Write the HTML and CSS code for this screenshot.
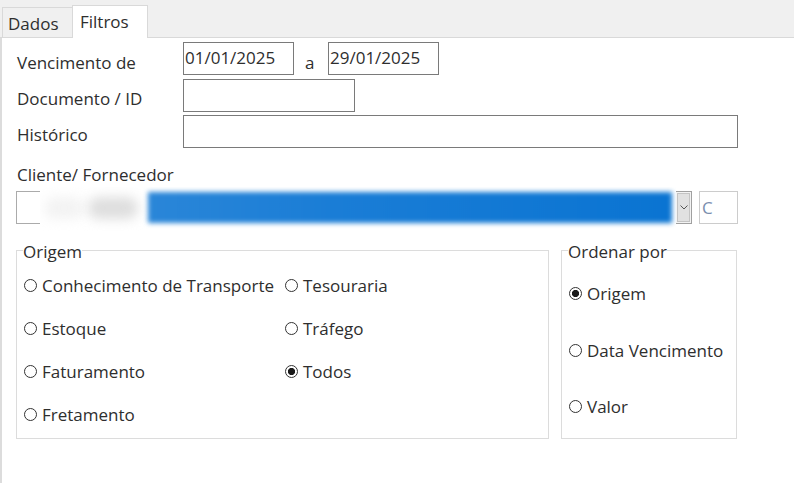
FILE: index.html
```html
<!DOCTYPE html>
<html lang="pt-BR">
<head>
<meta charset="utf-8">
<title>Filtros</title>
<link rel="stylesheet" href="styles.css">
</head>
<body>
<div class="window">
  <div class="tabstrip">
    <div class="tab">Dados</div>
    <div class="tab active">Filtros</div>
  </div>
  <div class="panel">
    <div class="row row1">
      <label class="lbl">Vencimento de</label>
      <input class="txt date" value="01/01/2025">
      <span class="sep">a</span>
      <input class="txt date" value="29/01/2025">
    </div>
    <div class="row row2">
      <label class="lbl">Documento / ID</label>
      <input class="txt doc" value="">
    </div>
    <div class="row row3">
      <label class="lbl">Histórico</label>
      <input class="txt hist" value="">
    </div>
    <div class="lbl-block">Cliente/ Fornecedor</div>
    <div class="combo-row">
      <div class="combo">
        <div class="combo-field"></div>
        <div class="combo-btn">
          <svg width="8" height="5" viewBox="0 0 8 5"><path d="M0.5 0.5 L4 4 L7.5 0.5" fill="none" stroke="#555" stroke-width="1"/></svg>
        </div>
      </div>
      <div class="code-box">C</div>
      <div class="redact">
        <div class="smudge light"></div>
        <div class="smudge"></div>
        <div class="bar"></div>
      </div>
    </div>
    <div class="groups">
      <fieldset class="group origem">
        <legend>Origem</legend>
        <div class="radio-grid">
          <div class="radio"><span class="dot"></span>Conhecimento de Transporte</div>
          <div class="radio"><span class="dot"></span>Tesouraria</div>
          <div class="radio"><span class="dot"></span>Estoque</div>
          <div class="radio"><span class="dot"></span>Tráfego</div>
          <div class="radio"><span class="dot"></span>Faturamento</div>
          <div class="radio"><span class="dot on"></span>Todos</div>
          <div class="radio"><span class="dot"></span>Fretamento</div>
        </div>
      </fieldset>
      <fieldset class="group ordenar">
        <legend>Ordenar por</legend>
        <div class="radio-col">
          <div class="radio"><span class="dot on"></span>Origem</div>
          <div class="radio"><span class="dot"></span>Data Vencimento</div>
          <div class="radio"><span class="dot"></span>Valor</div>
        </div>
      </fieldset>
    </div>
  </div>
</div>
</body>
</html>
```

FILE: styles.css
```css
* { box-sizing: border-box; }

html, body {
  margin: 0;
  height: 100%;
}

body {
  font-family: "Open Sans", "Noto Sans", sans-serif;
  font-size: 17px;
  line-height: 23px;
  color: #2e2e2e;
  background: #fff;
}

.window {
  height: 483px;
  display: flex;
  flex-direction: column;
}

/* tabs */
.tabstrip {
  height: 38px;
  flex: none;
  background: #f0f0f0;
  border-bottom: 1px solid #d9d9d9;
  display: flex;
  align-items: flex-end;
  padding-left: 2px;
}

.tab {
  width: 70px;
  height: 30px;
  padding: 4px 0 0 5px;
  border: 1px solid #d9d9d9;
  border-bottom: none;
  border-right: none;
  background: #f0f0f0;
}

.tab.active {
  width: 76px;
  height: 33px;
  margin-bottom: -1px;
  padding: 4px 0 0 7px;
  border-right: 1px solid #d9d9d9;
  background: #fff;
  position: relative;
  z-index: 1;
}

/* panel */
.panel {
  flex: 1;
  border-left: 2px solid #dcdcdc;
  padding: 4px 0 0 14px;
}

.row {
  display: flex;
  height: 33px;
}

.row1 { margin-bottom: 4px; }
.row2 { margin-bottom: 3px; }

.lbl {
  width: 167px;
  flex: none;
  padding: 8px 0 0 1px;
}

.row1 .lbl { padding-top: 9px; }

.txt {
  height: 33px;
  margin: 0;
  border: 1px solid #7a7a7a;
  border-radius: 0;
  padding: 0 0 2px 1px;
  font: inherit;
  color: #2e2e2e;
  background: #fff;
  outline: none;
}

.date { width: 111px; }
.doc { width: 172px; }
.hist { width: 555px; }

.sep {
  width: 34px;
  flex: none;
  padding: 9px 0 0 11px;
}

.lbl-block {
  margin-top: 15px;
  padding-left: 1px;
}

.combo-row {
  margin-top: 5px;
  height: 33px;
  display: flex;
  position: relative;
}

.combo {
  width: 676px;
  display: flex;
}

.combo-field {
  flex: 1;
  border: 1px solid #ababab;
  border-right: none;
  background: #fff;
}

.combo-btn {
  width: 17px;
  border: 1px solid #a0a0a0;
  box-shadow: inset 0 0 0 1px #f3f3f3, inset 0 0 0 2px #c4c4c4;
  background: #e1e1e1;
  display: flex;
  align-items: center;
  justify-content: center;
}

.code-box {
  width: 39px;
  margin-left: 7px;
  border: 1px solid #cccccc;
  padding: 4px 0 0 2px;
  color: #7b8fae;
}

/* redacted (blurred) combo content */
.redact {
  position: absolute;
  left: 24px;
  top: -4px;
  width: 636px;
  height: 44px;
  background: #fff;
  overflow: hidden;
}

.smudge {
  position: absolute;
  left: 48px;
  top: 10px;
  width: 50px;
  height: 22px;
  border-radius: 10px;
  background: #dedede;
  filter: blur(6px);
}

.smudge.light {
  left: 4px;
  width: 40px;
  background: #f3f3f3;
}

.bar {
  position: absolute;
  left: 108px;
  top: 5px;
  width: 524px;
  height: 31px;
  background: linear-gradient(90deg, #2a86d8 0%, #1a7dd6 35%, #0a74d2 100%);
  filter: blur(2.5px);
}

/* group boxes */
.groups {
  margin-top: 13px;
  display: flex;
  gap: 12px;
}

.group {
  margin: 0;
  min-width: 0;
  height: 202px;
  border: 1px solid #dcdcdc;
  padding: 11px 0 0 7px;
}

.group legend {
  padding: 3px 0 0 0;
  margin-left: -1px;
  line-height: 23px;
}

.origem { width: 533px; }

.ordenar {
  width: 176px;
  padding-top: 19px;
}

.radio-grid {
  display: grid;
  grid-template-columns: 261px auto;
  row-gap: 20px;
}

.radio-col {
  display: flex;
  flex-direction: column;
  gap: 33.5px;
}

.radio {
  height: 23px;
  display: flex;
  align-items: center;
  white-space: nowrap;
}

.dot {
  width: 13px;
  height: 13px;
  flex: none;
  margin-right: 5px;
  border: 1px solid #333;
  border-radius: 50%;
  background: #fff;
}

.dot.on {
  background: radial-gradient(circle, #1a1a1a 0 3.3px, #fff 3.9px);
}
```
